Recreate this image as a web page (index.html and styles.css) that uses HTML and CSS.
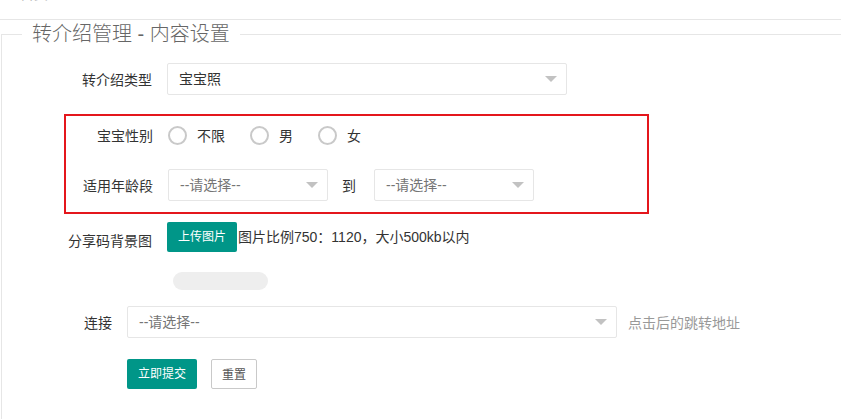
FILE: index.html
```html
<!DOCTYPE html>
<html lang="zh-CN">
<head>
  <meta charset="UTF-8">
  <meta name="viewport" content="width=device-width, initial-scale=1.0">
  <title>转介绍管理 - 内容设置</title>
  <link rel="stylesheet" href="styles.css">
</head>
<body>

  <div class="crumb"><span>首页</span></div>

  <fieldset class="field">
    <legend>转介绍管理 - 内容设置</legend>

    <form class="form">
      <div class="row">
        <label class="form-label">转介绍类型</label>
        <div class="select select-main"><span class="value">宝宝照</span><i class="arrow"></i></div>
      </div>

      <div class="highlight">
        <div class="row">
          <label class="form-label">宝宝性别</label>
          <div class="radios">
            <span class="radio"><i class="circle"></i>不限</span>
            <span class="radio"><i class="circle"></i>男</span>
            <span class="radio"><i class="circle"></i>女</span>
          </div>
        </div>
        <div class="row row-age">
          <label class="form-label">适用年龄段</label>
          <div class="select select-age"><span class="placeholder">--请选择--</span><i class="arrow"></i></div>
          <span class="to">到</span>
          <div class="select select-age"><span class="placeholder">--请选择--</span><i class="arrow"></i></div>
        </div>
      </div>

      <div class="row row-upload">
        <label class="form-label tall">分享码背景图</label>
        <button type="button" class="btn">上传图片</button>
        <span class="upload-tip">图片比例750：1120，大小500kb以内</span>
      </div>

      <div class="preview"></div>

      <div class="row row-link">
        <label class="form-label short">连接</label>
        <div class="select select-link"><span class="placeholder">--请选择--</span><i class="arrow"></i></div>
        <span class="hint">点击后的跳转地址</span>
      </div>

      <div class="actions">
        <button type="button" class="btn">立即提交</button>
        <button type="reset" class="btn btn-plain">重置</button>
      </div>
    </form>
  </fieldset>

</body>
</html>
```

FILE: styles.css
```css
body {
  margin: 0;
  font-family: "Liberation Sans", "Noto Sans CJK SC", sans-serif;
  font-size: 14px;
  color: #333;
  background-color: #fff;
}
.crumb {
  height: 19px;
  overflow: hidden;
  border-bottom: 1px solid #e6e6e6;
  padding-left: 20px;
}
.crumb span {
  display: block;
  margin-top: -16px;
  line-height: 20px;
  color: #bbb;
}
.field {
  margin: 0 0 0 1px;
  padding: 15px 0 40px 0;
  border: 1px solid #e6e6e6;
  border-right: none;
  border-bottom: none;
}
.field legend {
  margin-left: 20px;
  padding: 0 10px;
  font-size: 20px;
  font-weight: 300;
  line-height: 28px;
  color: #666;
}
.form {
  padding-left: 40px;
}
.row {
  display: flex;
  align-items: center;
  height: 32px;
}
.form-label {
  box-sizing: border-box;
  width: 125px;
  padding-right: 15px;
  text-align: right;
  flex-shrink: 0;
}
.form-label.short {
  width: 85px;
}
.select {
  box-sizing: border-box;
  position: relative;
  height: 32px;
  border: 1px solid #e6e6e6;
  border-radius: 2px;
  padding-left: 11px;
  line-height: 30px;
}
.select .placeholder {
  color: #757575;
}
.arrow {
  position: absolute;
  right: 9px;
  top: 12px;
  width: 0;
  height: 0;
  border-left: 6px solid transparent;
  border-right: 6px solid transparent;
  border-top: 6px solid #c2c2c2;
}
.select-main {
  width: 400px;
}
.highlight {
  margin: 19px 0 0 22px;
  width: 581px;
  border: 2px solid #e4161c;
  padding: 3px 0 11px;
}
.highlight .form-label {
  width: 102px;
}
.radios {
  display: flex;
  align-items: center;
}
.radio {
  display: flex;
  align-items: center;
  margin-right: 25px;
}
.circle {
  box-sizing: border-box;
  width: 19px;
  height: 19px;
  border: 2px solid #c9c9c9;
  border-radius: 50%;
  margin-right: 10px;
}
.row-age {
  margin-top: 18px;
}
.select-age {
  width: 160px;
}
.to {
  margin: 0 18px 0 14px;
}
.row-upload {
  margin-top: 8px;
  height: 38px;
  align-items: flex-start;
}
.form-label.tall {
  line-height: 38px;
}
.btn {
  height: 30px;
  padding: 0 11px;
  border: none;
  border-radius: 2px;
  background-color: #009688;
  color: #fff;
  font-family: inherit;
  font-size: 12px;
  line-height: 30px;
  cursor: pointer;
}
.upload-tip {
  line-height: 30px;
  margin-left: 1px;
}
.preview {
  width: 95px;
  height: 18px;
  margin: 12px 0 0 131px;
  border-radius: 9px;
  background-color: #eee;
}
.row-link {
  margin-top: 16px;
}
.select-link {
  width: 490px;
}
.hint {
  margin-left: 11px;
  color: #999;
}
.actions {
  display: flex;
  gap: 14px;
  margin: 21px 0 0 85px;
}
.btn-plain {
  padding: 0 10px;
  background-color: #fff;
  border: 1px solid #c9c9c9;
  color: #555;
}
```
